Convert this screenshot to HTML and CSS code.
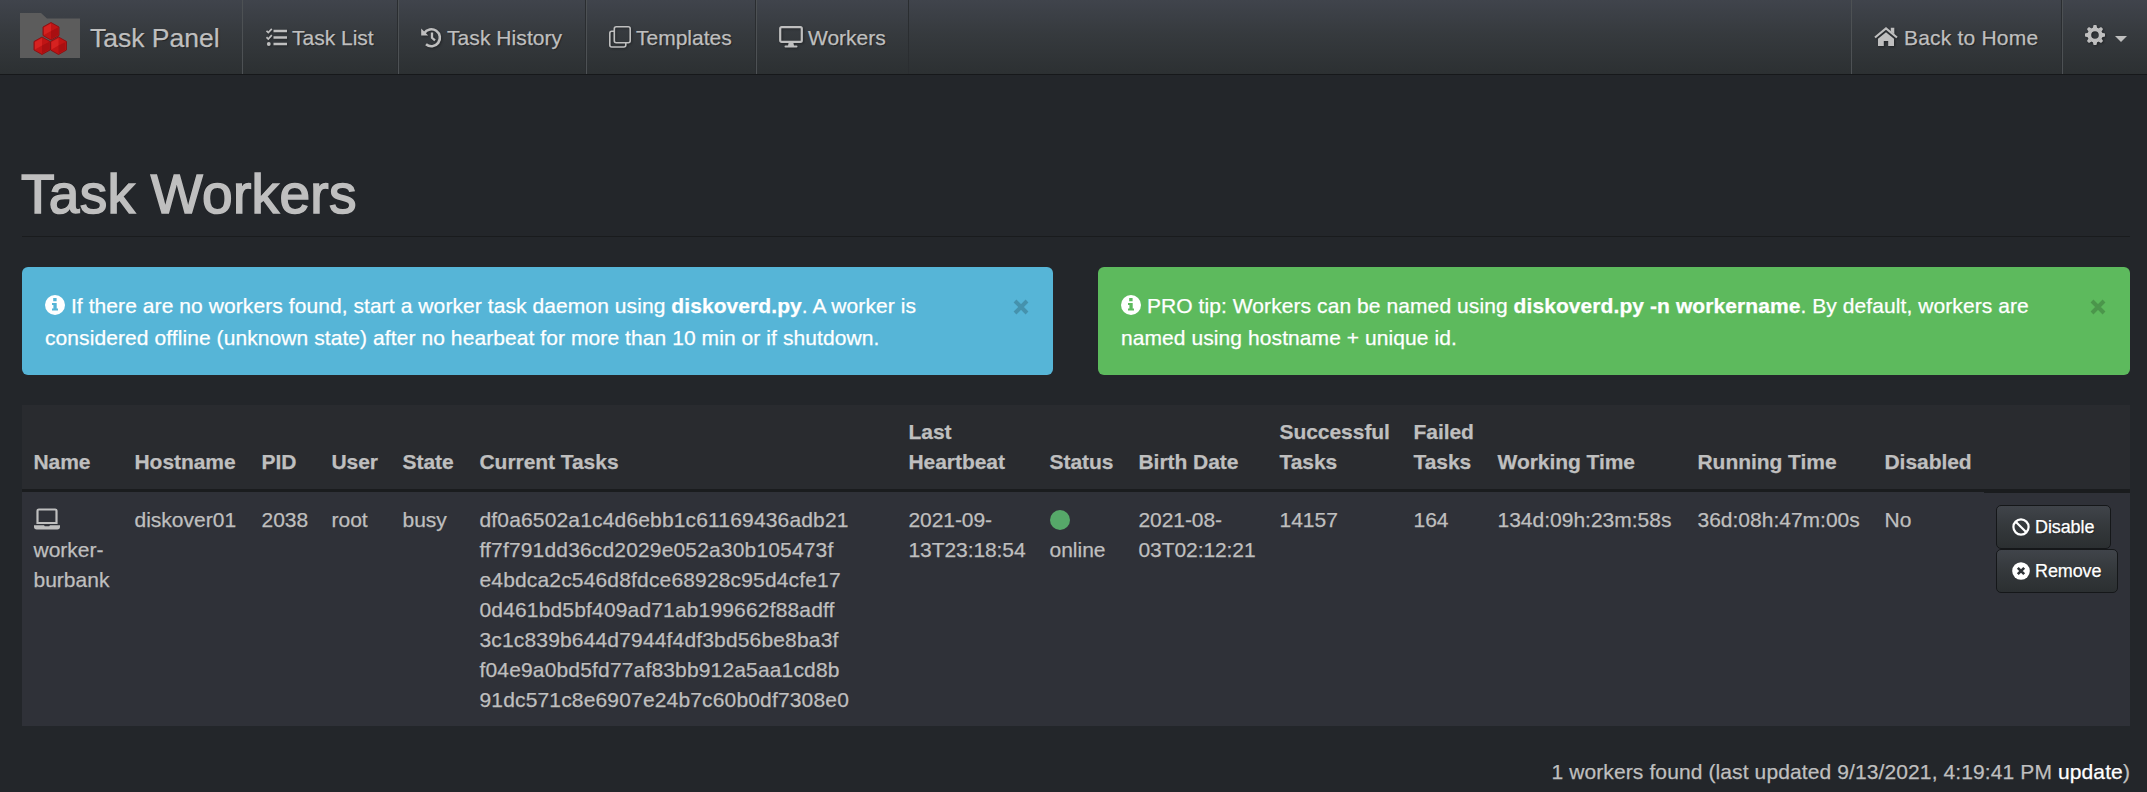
FILE: index.html
```html
<!DOCTYPE html>
<html lang="en">
<head>
<meta charset="utf-8">
<title>Task Workers</title>
<link rel="stylesheet" href="styles.css">
</head>
<body>
<nav class="navbar">
  <a class="brand">
    <svg class="logo" viewBox="0 0 60 45">
      <path d="M0 0H21L27 5.500H60V45H0Z" fill="#5c5c5c"/>
      <g fill="#c01414" stroke="#8a1214" stroke-width="1">
        <path d="M31 9.500l8 4.500v8.500l-8 4.500-8-4.500V14z"/>
        <path d="M22 24l8 4.500v8.500l-8 4.500-8-4.500v-8.500z"/>
        <path d="M38.500 24l8 4.500v8.500l-8 4.500-8-4.500v-8.500z"/>
      </g>
      <g fill="#d62220">
        <path d="M31 10.500l-7 4v7.500l7-4z"/>
        <path d="M22 25l-7 4v7.500l7-4z"/>
        <path d="M38.500 25l-7 4v7.500l7-4z"/>
      </g>
      <g fill="#a90f11">
        <path d="M31 18l7-3.500V22l-7 4z"/>
        <path d="M22 32.500l7-3.500v7.500l-7 4z"/>
        <path d="M38.500 32.500l7-3.500v7.500l-7 4z"/>
      </g>
    </svg>
    <span class="brand-name">Task Panel</span>
  </a>
  <a class="nav-item nav-list">
    <svg class="icon i-list" viewBox="0 0 21 19" fill="none" stroke="currentColor">
      <path d="M7.500 3H21M7.500 9.500H21M7.500 16H21" stroke-width="2.300"/>
      <path d="M.5 2.800l1.800 1.800L5.800.8M.5 9.200l1.800 1.800 3.500-3.800" stroke-width="1.700"/>
      <circle cx="2.800" cy="16" r="1.900" fill="currentColor" stroke="none"/>
    </svg>
    <span>Task List</span>
  </a>
  <a class="nav-item nav-history">
    <svg class="icon i-history" viewBox="0 0 21 21" fill="none" stroke="currentColor">
      <path d="M3.200 6.200A8.500 8.500 0 1 1 5 17.300" stroke-width="2.600"/>
      <path d="M.2 1.500v6.900h7z" fill="currentColor" stroke="none"/>
      <path d="M11 5.500v5.300l3 2.600" stroke-width="2.300"/>
    </svg>
    <span>Task History</span>
  </a>
  <a class="nav-item nav-templates">
    <svg class="icon i-clone" viewBox="0 0 22 22" fill="none" stroke="currentColor" stroke-width="1.600">
      <rect x="5.300" y=".8" width="15.900" height="15.900" rx="2"/>
      <path d="M5 5.200H2.800a2 2 0 0 0-2 2V19a2 2 0 0 0 2 2h12a2 2 0 0 0 2-2v-2"/>
    </svg>
    <span>Templates</span>
  </a>
  <a class="nav-item nav-workers">
    <svg class="icon i-desktop" viewBox="0 0 24 22" fill="none" stroke="currentColor">
      <rect x="1.200" y="1.200" width="21.600" height="14.600" rx="1.400" stroke-width="2.200"/>
      <path d="M9.800 16h4.400l.8 3.400h2.500a1 1 0 0 1 0 2h-11a1 1 0 0 1 0-2H9z" fill="currentColor" stroke="none"/>
    </svg>
    <span>Workers</span>
  </a>
  <div class="nav-gap"></div>
  <a class="nav-item nav-home">
    <svg class="icon i-home" viewBox="0 0 24 20">
      <path d="M1 10.500L12 1.500l11 9" fill="none" stroke="currentColor" stroke-width="2.200"/>
      <path d="M16.800.8h3.500v6.500l-3.500-2.900z" fill="currentColor"/>
      <path d="M12 5.200l8 6.500V19h-5.800v-5H9.800v5H4v-7.300z" fill="currentColor"/>
    </svg>
    <span>Back to Home</span>
  </a>
  <a class="nav-item nav-settings">
    <svg class="icon i-cog" viewBox="-10 -10 20 20" fill="currentColor">
      <circle r="5.700" fill="none" stroke="currentColor" stroke-width="3.800"/>
      <path id="tooth" d="M-2.200-7L-1.400-10h2.800L2.200-7z"/>
      <use href="#tooth" transform="rotate(45)"/><use href="#tooth" transform="rotate(90)"/>
      <use href="#tooth" transform="rotate(135)"/><use href="#tooth" transform="rotate(180)"/>
      <use href="#tooth" transform="rotate(225)"/><use href="#tooth" transform="rotate(270)"/>
      <use href="#tooth" transform="rotate(315)"/>
    </svg>
    <span class="caret"></span>
  </a>
</nav>

<main class="content">
  <h1 class="title">Task Workers</h1>
  <section class="alerts">
    <div class="alert alert-info">
      <p class="alert-text"><svg class="info" viewBox="0 0 20 20"><circle cx="10" cy="10" r="10" fill="#fff"/><path class="info-mark" d="M8.200 3h3.400v3.300H8.200zM7 8h4.700v5.500H13v2H7v-2h1.400V10H7z"/></svg> If there are no workers found, start a worker task daemon using <b>diskoverd.py</b>. A worker is<br>considered offline (unknown state) after no hearbeat for more than 10 min or if shutdown.</p>
      <svg class="close" viewBox="0 0 16 16"><path d="M2 2l12 12M14 2L2 14"/></svg>
    </div>
    <div class="alert alert-success">
      <p class="alert-text"><svg class="info" viewBox="0 0 20 20"><circle cx="10" cy="10" r="10" fill="#fff"/><path class="info-mark" d="M8.200 3h3.400v3.300H8.200zM7 8h4.700v5.500H13v2H7v-2h1.400V10H7z"/></svg> PRO tip: Workers can be named using <b>diskoverd.py -n workername</b>. By default, workers are<br>named using hostname + unique id.</p>
      <svg class="close" viewBox="0 0 16 16"><path d="M2 2l12 12M14 2L2 14"/></svg>
    </div>
  </section>

  <table class="workers">
    <colgroup>
      <col class="c-name"><col class="c-host"><col class="c-pid"><col class="c-user"><col class="c-state">
      <col class="c-tasks"><col class="c-beat"><col class="c-status"><col class="c-birth"><col class="c-ok">
      <col class="c-fail"><col class="c-working"><col class="c-running"><col class="c-disabled"><col class="c-actions">
    </colgroup>
    <thead>
      <tr>
        <th>Name</th><th>Hostname</th><th>PID</th><th>User</th><th>State</th><th>Current Tasks</th>
        <th>Last<br>Heartbeat</th><th>Status</th><th>Birth Date</th><th>Successful<br>Tasks</th>
        <th>Failed<br>Tasks</th><th>Working Time</th><th>Running Time</th><th>Disabled</th><th></th>
      </tr>
    </thead>
    <tbody>
      <tr>
        <td><svg class="laptop" viewBox="0 0 26 22"><path d="M3.500 15V2.800a1.300 1.300 0 0 1 1.300-1.300h16.400a1.300 1.300 0 0 1 1.300 1.300V15z" fill="none" stroke="currentColor" stroke-width="2.200"/><path d="M0 17.300h10l.8 1h4.400l.8-1h10v1.400a2.700 2.700 0 0 1-2.700 2.700H2.700A2.700 2.700 0 0 1 0 18.700z" fill="currentColor"/></svg><br>worker-<br>burbank</td>
        <td>diskover01</td>
        <td>2038</td>
        <td>root</td>
        <td>busy</td>
        <td class="ids">df0a6502a1c4d6ebb1c61169436adb21<br>ff7f791dd36cd2029e052a30b105473f<br>e4bdca2c546d8fdce68928c95d4cfe17<br>0d461bd5bf409ad71ab199662f88adff<br>3c1c839b644d7944f4df3bd56be8ba3f<br>f04e9a0bd5fd77af83bb912a5aa1cd8b<br>91dc571c8e6907e24b7c60b0df7308e0</td>
        <td class="date">2021-09-<br>13T23:18:54</td>
        <td><span class="dot"></span><br>online</td>
        <td class="date">2021-08-<br>03T02:12:21</td>
        <td>14157</td>
        <td>164</td>
        <td>134d:09h:23m:58s</td>
        <td>36d:08h:47m:00s</td>
        <td>No</td>
        <td class="actions">
          <div class="buttons">
            <button class="btn btn-disable"><svg class="btn-icon" viewBox="0 0 18 18" fill="none" stroke="currentColor" stroke-width="2.200"><circle cx="9" cy="9" r="7.600"/><path d="M3.700 3.700l10.600 10.600"/></svg>Disable</button>
            <button class="btn btn-remove"><svg class="btn-icon" viewBox="0 0 18 18"><circle cx="9" cy="9" r="8.800" fill="currentColor"/><path d="M5.800 5.800l6.400 6.400M12.200 5.800l-6.400 6.400" stroke="#2f3337" stroke-width="2.600"/></svg>Remove</button>
          </div>
        </td>
      </tr>
    </tbody>
  </table>
  <p class="summary">1 workers found (last updated 9/13/2021, 4:19:41 PM <a class="update">update</a>)</p>
</main>
</body>
</html>
```
FILE: styles.css
```css
* { box-sizing: border-box; }
body {
  margin: 0;
  height: 792px;
  overflow: hidden;
  background: #23262a;
  color: #bfbfbf;
  font: 21px/30px "Liberation Sans", Arial, sans-serif;
  -webkit-text-stroke: .250px currentColor;
}
svg { flex: none; }

.navbar {
  display: flex;
  height: 75px;
  border-bottom: 1px solid #16181a;
  background: linear-gradient(#40444c, #363a3e 45%, #2c3032);
  text-shadow: 1px 1px 1px rgba(0, 0, 0, .4);
}
.brand {
  display: flex;
  width: 242px;
  padding-left: 20px;
  gap: 10px;
}
.logo { width: 60px; height: 45px; margin-top: 13px; }
.brand-name { padding-top: 1px; font-size: 26.500px; line-height: 74px; white-space: nowrap; }
.nav-item {
  display: flex;
  align-items: center;
  gap: 5px;
  white-space: nowrap;
  border-left: 1px solid #4d5154;
  border-right: 1px solid #2a2d30;
}
.nav-item span:not(.caret) { padding-top: 2px; }
.icon { filter: drop-shadow(1px 1px 1px rgba(0, 0, 0, .35)); }
.nav-list { width: 156px; padding-left: 23px; }
.nav-history { width: 188px; padding-left: 22px; letter-spacing: .070px; }
.nav-templates { width: 170px; padding-left: 22px; }
.nav-workers { width: 153px; padding-left: 22px; }
.nav-gap { flex: 1; }
.nav-home { width: 211px; padding-left: 22px; gap: 6px; letter-spacing: .200px; }
.nav-settings { width: 85px; padding-left: 22px; gap: 10px; border-right: 0; }
.i-list { width: 21px; height: 19px; }
.i-history { width: 21px; height: 21px; }
.i-clone { width: 22px; height: 22px; }
.i-desktop { width: 24px; height: 22px; }
.i-home { width: 24px; height: 20px; }
.i-cog { width: 20px; height: 20px; margin-bottom: 4px; }
.caret {
  border: 6px solid transparent;
  border-top-color: #bfbfbf;
  border-bottom: 0;
  margin-top: 3px;
}

.content { padding: 91px 17px 0 22px; }
.title {
  margin: 0;
  height: 71px;
  padding-top: 1px;
  border-bottom: 1px solid #191b1d;
  font-size: 55px;
  line-height: 54px;
  font-weight: 400;
  letter-spacing: .300px;
  text-indent: -1px;
  -webkit-text-stroke: 1.600px #bfbfbf;
  text-shadow: -1px -1px 0 rgba(0, 0, 0, .4);
}
.alerts {
  display: grid;
  grid-template-columns: 1031px 1032px;
  gap: 45px;
  margin-top: 30px;
}
.alert {
  display: flex;
  justify-content: space-between;
  height: 108px;
  padding: 23px 24px 0 23px;
  border-radius: 6px;
  color: #fff;
}
.alert-info { background: #56b5d7; }
.alert-success { background: #5dba5d; }
.alert-text { margin: 0; line-height: 32px; letter-spacing: .080px; white-space: nowrap; }
.info { width: 20px; height: 20px; vertical-align: -2px; }
.alert-info .info-mark { fill: #56b5d7; }
.alert-success .info-mark { fill: #5dba5d; }
.close { width: 16px; height: 16px; margin-top: 9px; fill: none; stroke-width: 4; }
.alert-info .close { stroke: #4592ad; }
.alert-success .close { stroke: #4b964b; }

.workers {
  width: 2108px;
  margin-top: 30px;
  table-layout: fixed;
  border-collapse: separate;
  border-spacing: 0;
}
.c-name { width: 101px; } .c-host { width: 127px; } .c-pid { width: 70px; }
.c-user { width: 71px; } .c-state { width: 77px; } .c-tasks { width: 429px; }
.c-beat { width: 141px; } .c-status { width: 89px; } .c-birth { width: 141px; }
.c-ok { width: 134px; } .c-fail { width: 84px; } .c-working { width: 200px; }
.c-running { width: 187px; } .c-disabled { width: 111px; } .c-actions { width: 146px; }
.workers th {
  height: 87px;
  padding: 12px 0 12px 11.500px;
  text-align: left;
  vertical-align: bottom;
  white-space: nowrap;
  letter-spacing: -.050px;
  background: #292b2f;
  border-bottom: 3px solid #1a1c1e;
}
.workers td {
  height: 234px;
  padding: 13px 0 11px 11.500px;
  vertical-align: top;
  white-space: nowrap;
  background: #2f3138;
}
.workers .ids { letter-spacing: .160px; }
.workers .date { letter-spacing: -.080px; }
.laptop { width: 26px; height: 22px; vertical-align: -3px; }
.dot {
  display: inline-block;
  width: 20px;
  height: 20px;
  border-radius: 50%;
  background: #56a869;
  vertical-align: -3px;
}
.workers .actions { padding: 12px 0 0 12px; border-top: 1px solid #1a1c1e; }
.buttons { display: flex; flex-direction: column; align-items: flex-start; }
.btn {
  display: flex;
  align-items: center;
  height: 44px;
  padding: 0 0 0 15px;
  gap: 5px;
  border: 1px solid #151719;
  border-radius: 5px;
  background: linear-gradient(#40444a, #34383b 50%, #2b2f31);
  color: #fff;
  font: 18px/26px "Liberation Sans", Arial, sans-serif;
  letter-spacing: -.100px;
  text-shadow: 1px 1px 1px rgba(0, 0, 0, .3);
}
.btn-disable { width: 115px; }
.btn-remove { width: 122px; }
.btn-icon { width: 18px; height: 18px; }
.summary { margin: 31px 0 0; text-align: right; letter-spacing: .110px; }
.update { color: #fff; }
```
